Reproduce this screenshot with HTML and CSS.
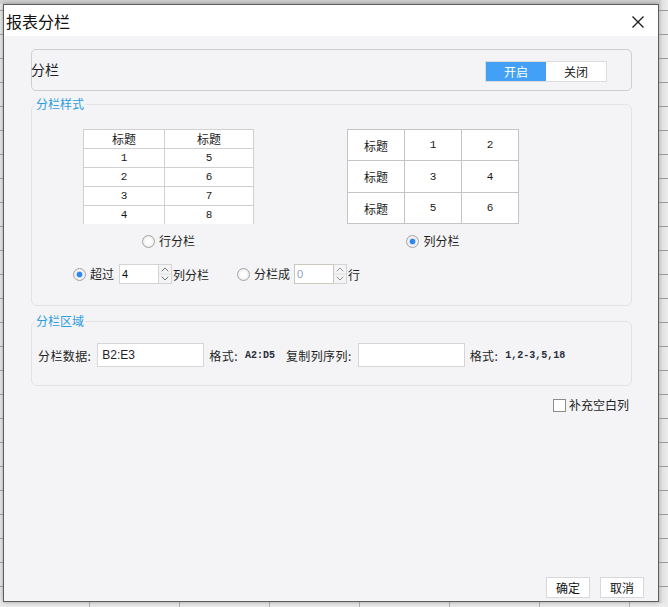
FILE: index.html
```html
<!DOCTYPE html>
<html lang="zh">
<head>
<meta charset="utf-8">
<title>报表分栏</title>
<link rel="stylesheet" href="styles.css">
</head>
<body>
<div class="screen">
  <div class="dialog">
    <div class="titlebar">
      <span class="title">报表分栏</span>
      <svg class="close" width="14" height="14" viewBox="0 0 14 14"><path d="M1.5 1.5L12.5 12.5M12.5 1.5L1.5 12.5" stroke="#1a1a1a" stroke-width="1.3" fill="none"/></svg>
    </div>
    <div class="body">
      <div class="content">
        <div class="switch-panel">
          <span class="switch-label">分栏</span>
          <div class="toggle"><span class="seg seg-on">开启</span><span class="seg">关闭</span></div>
        </div>

        <fieldset class="group group-style">
          <legend>分栏样式</legend>
          <div class="previews">
            <div class="preview">
              <table class="tbl tbl-row">
                <tr><th class="c1">标题</th><th class="c2">标题</th></tr>
                <tr><td>1</td><td>5</td></tr>
                <tr><td>2</td><td>6</td></tr>
                <tr><td>3</td><td>7</td></tr>
                <tr class="last"><td>4</td><td>8</td></tr>
              </table>
              <label class="radio"><span class="radio-mark"></span><span>行分栏</span></label>
            </div>
            <div class="preview">
              <table class="tbl tbl-col">
                <tr><th>标题</th><td>1</td><td>2</td></tr>
                <tr class="mid"><th>标题</th><td>3</td><td>4</td></tr>
                <tr><th>标题</th><td>5</td><td>6</td></tr>
              </table>
              <label class="radio"><span class="radio-mark checked"></span><span>列分栏</span></label>
            </div>
          </div>
          <div class="opts">
            <label class="radio"><span class="radio-mark checked"></span><span>超过</span></label>
            <div class="spin">
              <span class="spin-input">4</span>
              <span class="spin-btns">
                <svg width="13" height="20" viewBox="0 0 13 20"><path d="M3 7L6.5 3.5L10 7" stroke="#666" fill="none"/><path d="M3 13L6.5 16.5L10 13" stroke="#666" fill="none"/><path d="M0 10H13" stroke="#ddd"/></svg>
              </span>
            </div>
            <span class="after-spin">列分栏</span>
            <label class="radio radio-2"><span class="radio-mark"></span><span>分栏成</span></label>
            <div class="spin spin-off">
              <span class="spin-input">0</span>
              <span class="spin-btns">
                <svg width="13" height="20" viewBox="0 0 13 20"><path d="M3 7L6.5 3.5L10 7" stroke="#888" fill="none"/><path d="M3 13L6.5 16.5L10 13" stroke="#888" fill="none"/><path d="M0 10H13" stroke="#ddd"/></svg>
              </span>
            </div>
            <span class="after-spin">行</span>
          </div>
        </fieldset>

        <fieldset class="group group-area">
          <legend>分栏区域</legend>
          <div class="area-row">
            <span class="lbl">分栏数据:</span>
            <span class="field">B2:E3</span>
            <span class="lbl fmt">格式:</span>
            <span class="mono">A2:D5</span>
            <span class="lbl copy">复制列序列:</span>
            <span class="field"></span>
            <span class="lbl fmt">格式:</span>
            <span class="mono">1,2-3,5,18</span>
          </div>
        </fieldset>

        <div class="fill-row">
          <label class="check"><span class="check-mark"></span><span>补充空白列</span></label>
        </div>
      </div>
      <div class="footer">
        <button class="btn">确定</button>
        <button class="btn">取消</button>
      </div>
    </div>
  </div>
  <div class="side-strip"></div>
</div>
</body>
</html>
```

FILE: styles.css
```css
html, body {
  margin: 0;
  padding: 0;
}
body {
  width: 668px;
  height: 607px;
  overflow: hidden;
  background-color: #ececec;
  background-image:
    linear-gradient(to bottom, #d2d2d2 0 4px, transparent 4px),
    repeating-linear-gradient(to bottom, transparent 0 10px, #a9a9a9 10px 11px, transparent 11px 24px),
    repeating-linear-gradient(to right, transparent 0 89px, #b4b4b4 89px 90px);
  font-family: "Noto Sans CJK SC", "Noto Sans", sans-serif;
  font-size: 12px;
  color: #1f1f1f;
}
.screen {
  padding: 4px 0 0 3px;
  display: flex;
}
.dialog {
  box-sizing: border-box;
  width: 656px;
  height: 598px;
  border: 1px solid #5c5c5c;
  background: #f4f4f6;
  box-shadow: 0 0 5px rgba(0, 0, 0, 0.35);
  display: flex;
  flex-direction: column;
  flex: none;
}
.side-strip {
  width: 9px;
  height: 603px;
  margin-top: -4px;
  background-image:
    repeating-linear-gradient(to bottom, transparent 0 10px, #9a9a9a 10px 11px, transparent 11px 24px),
    linear-gradient(to right, #c4c4c4, #e2e2e2 40%, #ececec);
}
.titlebar {
  height: 31px;
  background: #fff;
  display: flex;
  align-items: center;
  justify-content: space-between;
  padding: 0 13px 0 2px;
  flex: none;
}
.title {
  font-size: 16px;
  line-height: 20px;
  color: #111;
  margin-top: 1px;
}
.close {
  display: block;
  margin-top: 2px;
}
.body {
  flex: 1;
  display: flex;
  flex-direction: column;
}
.content {
  flex: 1;
  padding: 13px 26px 0 27px;
}
.switch-panel {
  box-sizing: border-box;
  height: 42px;
  border: 1px solid #cfcfd3;
  border-radius: 5px;
  display: flex;
  align-items: center;
  justify-content: space-between;
  padding: 0 24px 0 0;
}
.switch-label {
  font-size: 14px;
  line-height: 18px;
  margin-left: -1px;
  margin-bottom: 2px;
}
.toggle {
  display: flex;
  border: 1px solid #dcdcdc;
  background: #fff;
  height: 19px;
  margin-top: 2px;
}
.seg {
  width: 60px;
  text-align: center;
  line-height: 19px;
  color: #222;
}
.seg-on {
  background: #42a0f7;
  color: #fff;
}
.group {
  margin: 0;
  padding: 0;
  border: 1px solid #e3e3e6;
  border-radius: 6px;
  min-inline-size: 0;
}
.group legend {
  color: #2c9ddf;
  font-size: 12px;
  line-height: 14px;
  padding: 0 1px;
  margin-left: 3px;
}
.group-style {
  margin-top: 6px;
  height: 209px;
  box-sizing: border-box;
}
.previews {
  display: flex;
  padding: 18px 0 0 51px;
  gap: 93px;
}
.preview {
  display: flex;
  flex-direction: column;
  align-items: center;
}
.tbl {
  border-collapse: collapse;
  table-layout: fixed;
  background: #fff;
}
.tbl th, .tbl td {
  padding: 0;
  text-align: center;
  font-weight: normal;
  color: #1a1a1a;
}
.tbl td {
  font-family: "Liberation Mono", "DejaVu Sans Mono", monospace;
  font-size: 11px;
}
.tbl-row th, .tbl-row td {
  border: 1px solid #d0d0d0;
  height: 18px;
  line-height: 18px;
}
.tbl-row .c1 { width: 80px; }
.tbl-row .c2 { width: 88px; }
.tbl-row tr.last td {
  border-bottom: none;
}
.tbl-col th, .tbl-col td {
  border: 1px solid #c4c4c4;
  height: 30px;
  width: 56px;
}
.tbl-col tr.mid th, .tbl-col tr.mid td {
  height: 31px;
}
.radio, .check {
  display: flex;
  align-items: center;
  gap: 4px;
  line-height: 16px;
}
.preview .radio {
  margin-top: 9px;
}
.radio-mark {
  box-sizing: border-box;
  width: 13px;
  height: 13px;
  border-radius: 50%;
  border: 1px solid #a4a4a4;
  background: radial-gradient(circle at 50% 50%, #fdfdfd 0 35%, #dedede 100%);
  flex: none;
}
.radio-mark.checked {
  background: radial-gradient(circle at 50% 50%, #2e86ee 0 2.4px, #b9d4f5 3px, #f6f6f6 4px, #dcdcdc 100%);
}
.opts {
  display: flex;
  align-items: center;
  padding-left: 41px;
  margin-top: 15px;
}
.spin {
  display: flex;
  margin-left: 5px;
}
.spin-input {
  box-sizing: border-box;
  width: 40px;
  height: 20px;
  border: 1px solid #d4d4d4;
  background: #fff;
  font-family: "Liberation Sans", Arial, sans-serif;
  font-size: 11px;
  line-height: 18px;
  padding-left: 2px;
  color: #111;
}
.spin-btns {
  box-sizing: border-box;
  width: 13px;
  height: 20px;
  border: 1px solid #d4d4d4;
  border-left: none;
  display: flex;
}
.spin-btns svg {
  display: block;
  margin-top: -1px;
}
.spin-off .spin-input {
  border-color: #cdc8bd;
  color: #8ea3bf;
}
.after-spin {
  margin-left: 1px;
}
.radio-2 {
  margin-left: 28px;
}
.radio-2 + .spin {
  margin-left: 4px;
}
.group-area {
  margin-top: 8px;
  height: 72px;
  box-sizing: border-box;
}
.area-row {
  display: flex;
  align-items: center;
  padding: 15px 0 0 6px;
}
.lbl {
  letter-spacing: 0.4px;
}
.field {
  box-sizing: border-box;
  width: 107px;
  height: 24px;
  border: 1px solid #d6d6d8;
  background: #fff;
  font-family: "Liberation Sans", Arial, sans-serif;
  font-size: 12px;
  line-height: 22px;
  padding-left: 4px;
  margin-left: 6px;
}
.lbl.fmt {
  margin-left: 5px;
}
.mono {
  font-family: "Liberation Mono", "DejaVu Sans Mono", monospace;
  font-size: 10px;
  font-weight: bold;
  margin-left: 7px;
  color: #2a2f3a;
}
.lbl.copy {
  margin-left: 11px;
}
.fill-row {
  display: flex;
  justify-content: flex-end;
  padding-right: 3px;
  margin-top: 11px;
}
.check-mark {
  box-sizing: border-box;
  width: 13px;
  height: 13px;
  border: 1px solid #8c8c8c;
  background: #fff;
}
.check {
  gap: 3px;
}
.footer {
  display: flex;
  justify-content: flex-end;
  gap: 10px;
  padding: 0 14px 3px 0;
}
.btn {
  box-sizing: border-box;
  width: 44px;
  height: 21px;
  border: 1px solid #d8d8d8;
  background: #fff;
  font-family: "Noto Sans CJK SC", sans-serif;
  font-size: 12px;
  line-height: 18px;
  padding: 0;
  color: #111;
}
```
